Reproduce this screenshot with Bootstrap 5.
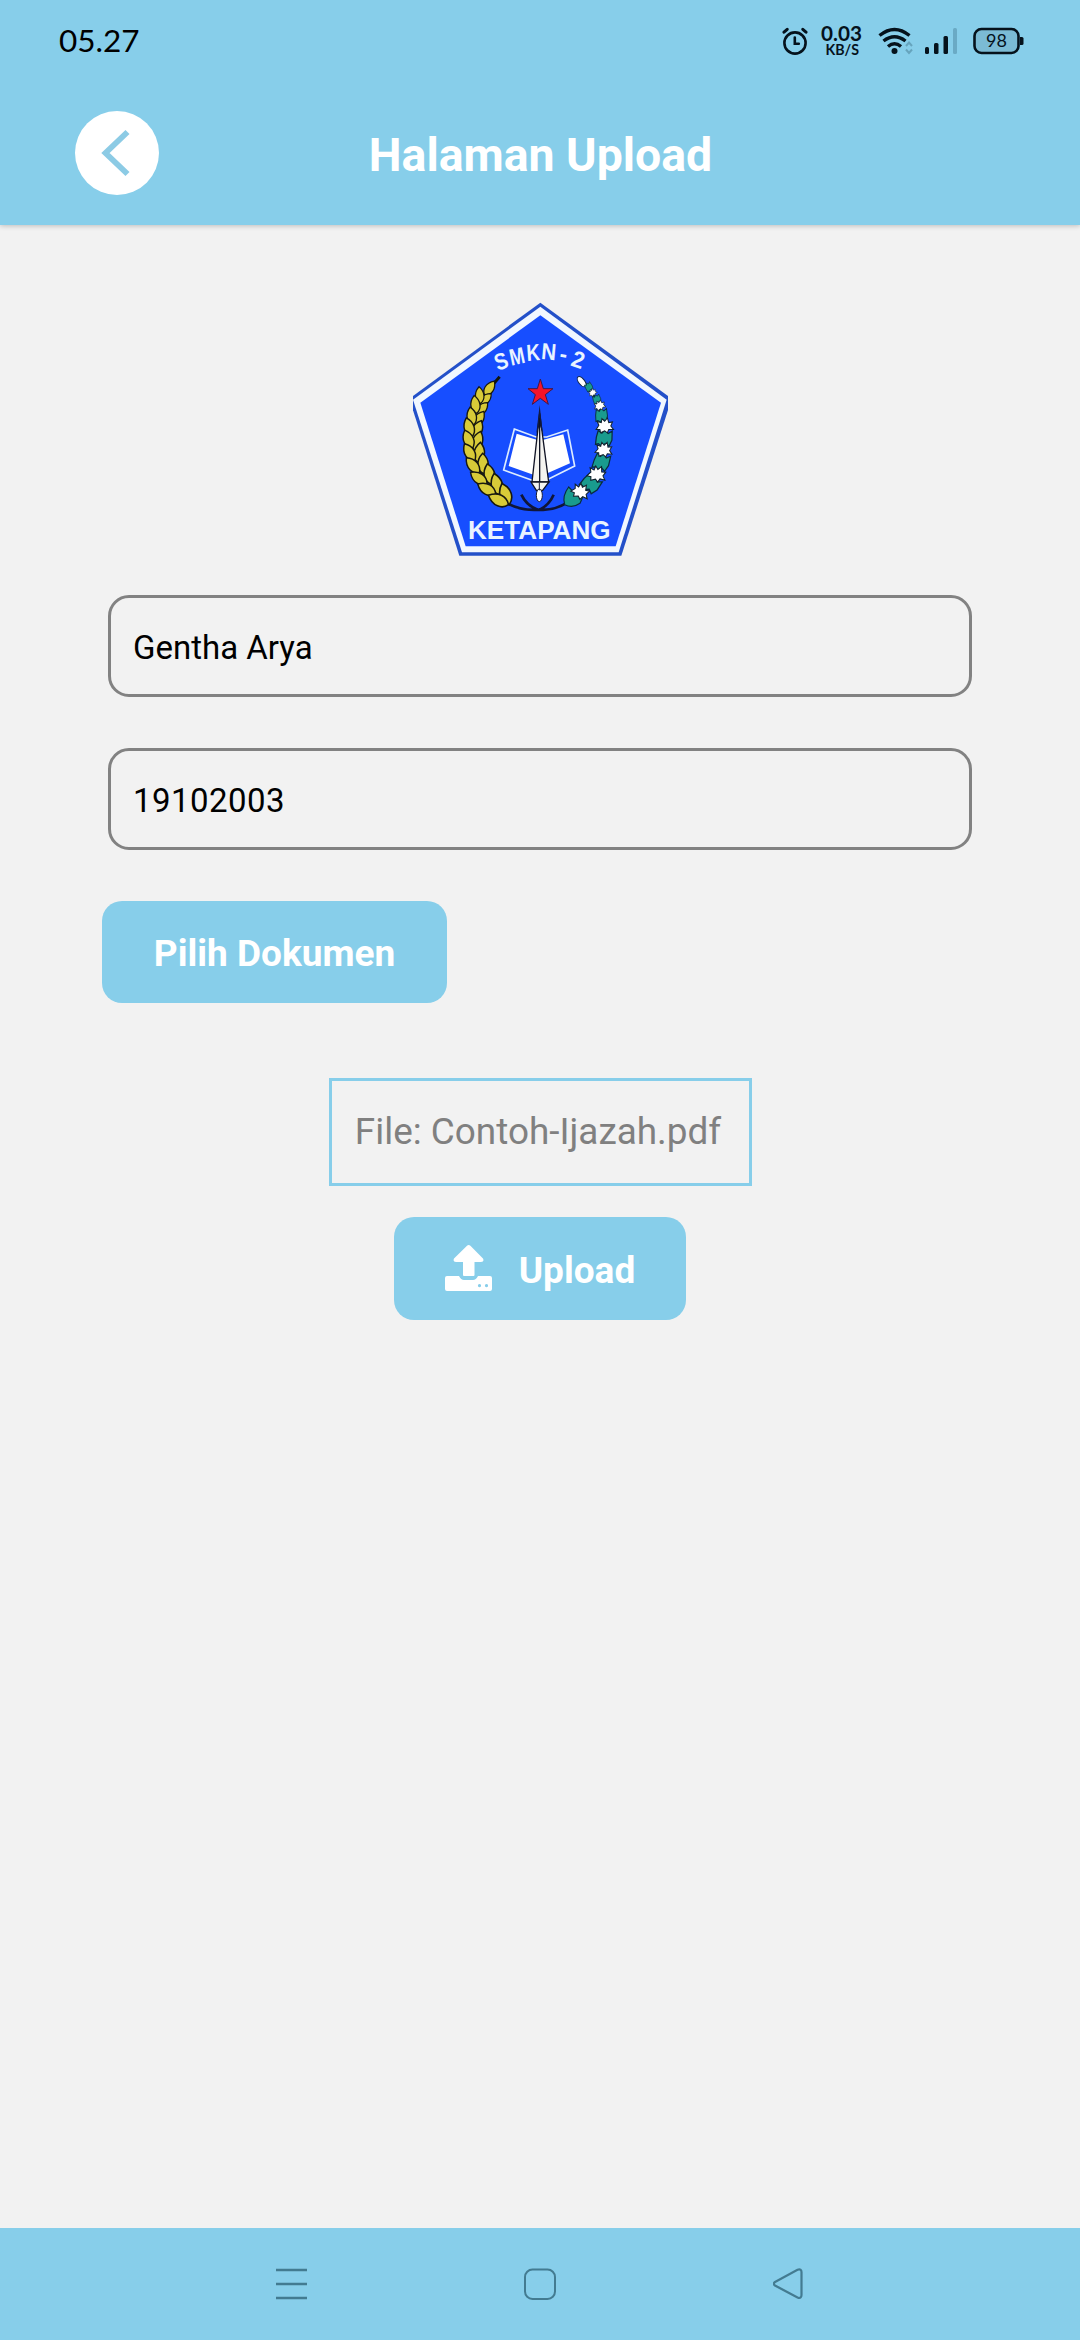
<!DOCTYPE html>
<html lang="id">
<head>
<meta charset="utf-8">
<meta name="viewport" content="width=device-width, initial-scale=1">
<title>Halaman Upload</title>
<link href="https://cdn.jsdelivr.net/npm/bootstrap@5.3.0/dist/css/bootstrap.min.css" rel="stylesheet">
<style>
  :root { --sky: #87ceea; }
  body { font-family: Roboto, "Noto Sans", sans-serif; background: #f2f2f2; color: #000; height: 2340px; line-height: 1.2; overflow: hidden; }
  svg { display: block; flex: none; }
  .top-area { background: var(--sky); height: 225px; box-shadow: 0 1px 5px rgba(0,0,0,.22); }
  .status-row { height: 80px; padding: 0 56px 0 59px; }
  .clock { font-family: Lato, sans-serif; font-size: 31.5px; padding-top: 1px; }
  .status-icons { padding-top: 1px; }
  .net-rate { margin: 0 15px 0 13px; overflow: visible; }
  .title-row { height: 145px; display: grid; grid-template-columns: 1fr auto 1fr; padding: 0 75px; align-items: center; }
  .back-btn { width: 84px; height: 84px; background: #fff; }
  .page-title { font-size: 46.4px; font-weight: 700; color: #fff; padding: 6px 0 0 1px; }
  .content { padding: 65px 108px 0; }
  .upload-form { margin-top: 25px; }
  .field { height: 102px; border: 3px solid #828282; border-radius: 21px; background: transparent; color: #000; font-size: 33px; padding: 2px 22px 0; }
  .field:focus { background: transparent; }
  .field-number { letter-spacing: .45px; margin-top: 51px; }
  .btn-sky { --bs-btn-bg: var(--sky); --bs-btn-color: #fff; --bs-btn-border-width: 0; --bs-btn-font-weight: 700; --bs-btn-font-size: 37px; --bs-btn-border-radius: 20px; height: 103px; padding: 4px 0 0; }
  .pick { width: 345px; margin: 51px 0 0 -6px; height: 102px; }
  .file-box { width: 423px; height: 108px; border: 3px solid var(--sky); font-size: 36.9px; color: #808080; margin-top: 75px; padding-right: 4px; }
  .send { width: 292px; margin-top: 31px; gap: 27px; }
  .send svg { margin-top: -5px; }
  .bottom-nav { height: 112px; background: var(--sky); padding: 0 276px; }
</style>
</head>
<body class="d-flex flex-column">
<header class="top-area">
  <div class="status-row d-flex align-items-center justify-content-between">
    <span class="clock">05.27</span>
    <div class="status-icons d-flex align-items-center">
      <svg width="26" height="28" viewBox="0 0 26 28" fill="none" stroke="#05121c" stroke-width="2.6" stroke-linecap="round"><circle cx="13" cy="16" r="10.6"/><path d="M12.8 10.5v6.3h4"/><path d="M2 5.2 5.2 2.3M24 5.2 20.8 2.3" stroke-width="3"/></svg>
      <svg class="net-rate" width="42" height="42" viewBox="0 0 42 42" fill="#05121c" font-family="Lato, sans-serif" font-weight="700"><text x="0" y="20.800" font-size="20" textLength="41" lengthAdjust="spacingAndGlyphs">0.03</text><text x="4.500" y="35" font-size="14.500" textLength="33.500" lengthAdjust="spacingAndGlyphs">KB/S</text></svg>
      <svg width="36" height="28" viewBox="0 0 36 28" fill="none" stroke="#05121c" stroke-width="3.4"><path d="M1.5 8.5Q16.500-3.500 31.500 8.500"/><path d="M5.500 14Q16.500 5.500 27.500 14"/><path d="M10 19.500Q16.500 14 23 19.500"/><circle cx="16.500" cy="24" r="3" fill="#05121c" stroke="none"/><path d="m28 19 3-3.500 3 3.500M28 22.500l3 3.500 3-3.500" stroke="#66a4bd" stroke-width="2"/></svg>
      <svg class="ms-2 me-3" width="35" height="28" viewBox="0 0 35 28" fill="#05121c"><rect x="3" y="20" width="4" height="7" rx="1.500"/><rect x="12" y="16" width="4.500" height="11" rx="1.500"/><rect x="21.500" y="9" width="4.500" height="18" rx="1.500"/><rect x="31" y="1" width="4" height="26" rx="1.500" fill="#6aaac5"/></svg>
      <svg width="51" height="28" viewBox="0 0 51 28"><rect x="1.500" y="2" width="44" height="24" rx="7" fill="#7bbbd5" stroke="#05121c" stroke-width="2.600"/><path d="M47 10h2q1.500 0 1.500 1.500v5q0 1.500-1.500 1.500h-2z" fill="#05121c"/><text x="23.500" y="20.300" text-anchor="middle" font-family="Lato, sans-serif" font-size="18" fill="#05121c">98</text></svg>
    </div>
  </div>
  <div class="title-row">
    <a href="#" class="back-btn rounded-circle d-block" aria-label="Kembali"><svg width="84" height="84" viewBox="0 0 84 84" fill="none" stroke="#8ccbe5" stroke-width="5.800"><path d="M52.500 21 30.500 42l22 21"/></svg></a>
    <h1 class="page-title m-0">Halaman Upload</h1>
  </div>
</header>

<main class="content flex-grow-1 d-flex flex-column align-items-center">
  <svg width="280" height="280" viewBox="0 0 840 840" role="img" aria-label="SMKN - 2 Ketapang">
    <defs>
      <path id="grain" d="M0-27C19-10 20 14 3 28C-15 20-20-6 0-27Z" fill="#d8cb38" stroke="#17180f" stroke-width="4"/>
      <path id="bloom" d="M-8-22 0-14 8-24 12-10 23-12 18 0 26 10 12 10 8 20 0 14-12 20-14 10-25 10-17-2-22-13-10-10Z" fill="#fff" stroke="#11232d" stroke-width="3"/>
      <path id="cup" d="M-19-22-8-15 0-25 10-15 21-23 22 4 15 22 4 15-6 24-16 17-24 20-23-2Z" fill="#199b8e" stroke="#0a2c3c" stroke-width="3.500"/>
      <clipPath id="edge"><rect x="39" y="30" width="765" height="780"/></clipPath>
    </defs>
    <g clip-path="url(#edge)">
      <path d="M421 38 815 326 664 797H178L28 326Z" fill="#2350c9"/>
      <path d="M421 50 800 329 656 787H186L39 329Z" fill="#f1f7ff"/>
      <path d="M421 76 783 338 647 769H197L61 338Z" fill="#174eff"/>
    </g>
    <g fill="#e9f4ff" font-family="Liberation Sans, sans-serif" font-weight="700">
      <g font-size="70"><text transform="translate(293 243) rotate(-20) scale(.84 1)">S</text><text transform="translate(334 227) rotate(-12) scale(.78 1)">M</text><text transform="translate(381 213) rotate(-4) scale(.8 1)">K</text><text transform="translate(422 207) rotate(5) scale(.88 1)">N</text><text transform="translate(476 214) rotate(9) scale(.95 1)">-</text><text transform="translate(509 226) rotate(19) scale(.95 1)">2</text></g>
      <text x="204" y="747" font-size="77" textLength="428" lengthAdjust="spacingAndGlyphs">KETAPANG</text>
    </g>
    <path d="m421 267 9 29h29l-23 18 9 29-24-18-24 18 9-29-22-18h28Z" fill="#f4142a" stroke="#401848" stroke-width="3"/>
    <!-- open book -->
    <path d="M343 417 408 441H440L503 420 524 528 440 570H394L311 540Z" fill="#174eff" stroke="#dcecff" stroke-width="5"/>
    <path d="M350 431 420 452 490 433 510 520 435 553 400 554 326 528Z" fill="#fff"/>
    <!-- spear -->
    <path d="M419 370 396 576h50Z" fill="#f5f4f0" stroke="#101325" stroke-width="4"/>
    <path d="M419 345 409 430 419 405 428 430Z" fill="#101a43"/>
    <path d="M419 385V576" stroke="#101325" stroke-width="4"/>
    <path d="m393 576 16 25h19l19-25Z" fill="#f5f4f0" stroke="#101325" stroke-width="4"/>
    <ellipse cx="418" cy="616" rx="9" ry="19" fill="#fff" stroke="#171a36" stroke-width="3"/>
    <path d="M418 577v24" stroke="#171a36" stroke-width="3"/>
    <!-- stems -->
    <path d="M322 640Q365 663 418 659Q462 663 503 637M364 614Q380 648 415 660M461 614Q448 644 418 660" fill="none" stroke="#101638" stroke-width="8"/>
    <!-- wheat -->
    <path d="M299 260Q222 340 220 470Q226 570 320 643" fill="none" stroke="#11150c" stroke-width="9"/>
    <g>
      <use href="#grain" transform="translate(268 294) rotate(36) scale(.95)"/>
      <use href="#grain" transform="translate(256 327) rotate(48) scale(.88)"/><use href="#grain" transform="translate(238 315) rotate(-2) scale(.92)"/>
      <use href="#grain" transform="translate(245 356) rotate(45) scale(.94)"/><use href="#grain" transform="translate(225 343) rotate(-6) scale(.98)"/>
      <use href="#grain" transform="translate(236 386) rotate(35)"/><use href="#grain" transform="translate(214 378) rotate(-8)"/>
      <use href="#grain" transform="translate(231 418) rotate(26) scale(1.080)"/><use href="#grain" transform="translate(206 412) rotate(-14) scale(1.080)"/>
      <use href="#grain" transform="translate(232 452) rotate(20) scale(1.100)"/><use href="#grain" transform="translate(204 448) rotate(-20) scale(1.080)"/>
      <use href="#grain" transform="translate(237 487) rotate(8) scale(1.120)"/><use href="#grain" transform="translate(207 487) rotate(-28) scale(1.080)"/>
      <use href="#grain" transform="translate(248 520) rotate(0) scale(1.120)"/><use href="#grain" transform="translate(217 526) rotate(-38) scale(1.080)"/>
      <use href="#grain" transform="translate(267 552) rotate(-9) scale(1.150)"/><use href="#grain" transform="translate(235 565) rotate(-52) scale(1.100)"/>
      <use href="#grain" transform="translate(289 582) rotate(-12) scale(1.200)"/><use href="#grain" transform="translate(259 598) rotate(-58) scale(1.120)"/>
      <use href="#grain" transform="translate(315 612) rotate(-16) scale(1.220)"/><use href="#grain" transform="translate(294 631) rotate(-62) scale(1.200)"/>
    </g>
    <!-- cotton -->
    <path d="M538 264Q605 325 610 430Q612 550 520 630" fill="none" stroke="#0c3441" stroke-width="9"/>
    <ellipse cx="545" cy="275" rx="9" ry="18" transform="rotate(-38 545 275)" fill="#fff" stroke="#112545" stroke-width="3"/>
    <use href="#cup" transform="translate(567 291) rotate(-32) scale(.46 .56)"/><use href="#bloom" transform="translate(578 308) rotate(-25) scale(.5)"/>
    <use href="#cup" transform="translate(591 328) rotate(-22) scale(.5 .56)"/>
    <use href="#cup" transform="translate(605 376) rotate(-5) scale(.78 .84)"/><use href="#bloom" transform="translate(599 347) rotate(-12) scale(.68)"/>
    <use href="#cup" transform="translate(613 445) rotate(4) scale(1.050 1)"/><use href="#bloom" transform="translate(614 408) scale(1.020)"/>
    <use href="#cup" transform="translate(605 517) rotate(15) scale(1.020 1.080)"/><use href="#bloom" transform="translate(611 480) rotate(6)"/>
    <use href="#cup" transform="translate(573 582) rotate(35) scale(1.150 1.080)"/><use href="#bloom" transform="translate(590 553) rotate(14) scale(1.080)"/>
    <path d="M506 591 520 605 548 622 540 640Q518 656 494 644Q486 617 506 591Z" fill="#199b8e" stroke="#0a2c3c" stroke-width="3.500"/><use href="#bloom" transform="translate(541 605) rotate(25) scale(1.060)"/>
  </svg>
  <form class="upload-form w-100 d-flex flex-column">
    <input class="form-control field" type="text" value="Gentha Arya" aria-label="Nama">
    <input class="form-control field field-number" type="text" value="19102003" aria-label="NIM">
    <button type="button" class="btn btn-sky pick">Pilih Dokumen</button>
    <div class="file-box d-flex align-items-center justify-content-center align-self-center">File: Contoh-Ijazah.pdf</div>
    <button type="button" class="btn btn-sky send d-flex align-items-center justify-content-center align-self-center">
      <svg width="47" height="46" viewBox="0 0 47 46" fill="#fff"><path d="M22 .8q1.700-1.600 3.400 0L38 13.500q1.600 3.500-2 3.500H29.500V30q0 1-1 1H19q-1 0-1-1V17H11q-3.500 0-2-3.500Z"/><path fill-rule="evenodd" d="M2 31H14Q16 35 19 35H28Q31 35 33 31H45q2 0 2 2V44q0 2-2 2H2q-2 0-2-2V33q0-2 2-2ZM34.500 39a1.600 1.600 0 1 0 .01 0ZM41.500 39a1.600 1.600 0 1 0 .01 0Z"/></svg>
      <span>Upload</span>
    </button>
  </form>
</main>

<nav class="bottom-nav d-flex align-items-center justify-content-between">
  <svg width="31" height="32" viewBox="0 0 31 32" stroke="#437b91" stroke-width="2.700"><path d="M0 2h31M0 16h31M0 30h31"/></svg>
  <svg width="32" height="32" viewBox="0 0 32 32" fill="none" stroke="#437b91" stroke-width="2"><rect x="1" y="1.500" width="30" height="29.500" rx="7.500"/></svg>
  <svg width="31" height="32" viewBox="0 0 31 32" fill="none" stroke="#437b91" stroke-width="2.200"><path d="M2 14 24.500 1.800Q28.500.500 28.500 4V27q0 4-4 2.400L2 17.500Q-.500 15.800 2 14Z"/></svg>
</nav>
<script src="https://cdn.jsdelivr.net/npm/bootstrap@5.3.0/dist/js/bootstrap.bundle.min.js"></script>
</body>
</html>
